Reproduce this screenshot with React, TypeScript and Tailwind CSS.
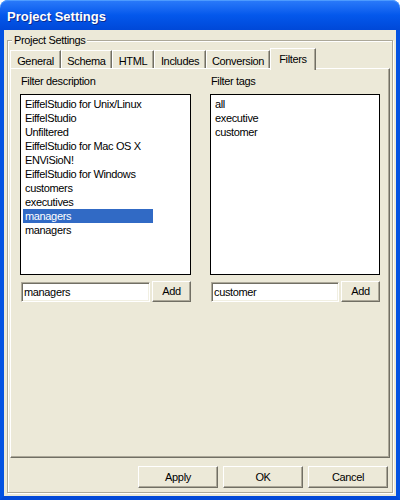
import clsx from "clsx";

const TABS = [
  { label: "General", width: "w-[51px]" },
  { label: "Schema", width: "w-[51px]" },
  { label: "HTML", width: "w-[42px]" },
  { label: "Includes", width: "w-[52px]" },
  { label: "Conversion", width: "w-[64px]" },
  { label: "Filters", width: "w-[46px]", selected: true },
];

const DESCRIPTIONS = [
  "EiffelStudio for Unix/Linux",
  "EiffelStudio",
  "Unfiltered",
  "EiffelStudio for Mac OS X",
  "ENViSioN!",
  "EiffelStudio for Windows",
  "customers",
  "executives",
  "managers",
  "managers",
];

const TAGS = ["all", "executive", "customer"];

const raised =
  "border border-t-white border-l-white border-r-[#716F64] border-b-[#716F64] shadow-[inset_-1px_-1px_0_#ACA899] bg-[#ECE9D8]";
const sunken =
  "border border-t-[#ACA899] border-l-[#ACA899] border-r-white border-b-white shadow-[inset_1px_1px_0_#716F64,inset_-1px_-1px_0_#F1EFE2] bg-white";

const ListBox = ({ items, selected }: { items: string[]; selected?: number }) => (
  <div className="h-[181px] border border-black bg-white pt-[2px] pl-[2px]">
    {items.map((v, i) => (
      <div
        key={i}
        className={clsx(
          "h-[14px] w-[130px] pl-[2px] leading-[15px] whitespace-nowrap",
          i === selected ? "bg-[#316AC5] text-white" : "text-black"
        )}
      >
        {v}
      </div>
    ))}
  </div>
);

const FilterColumn = ({
  label,
  items,
  value,
  selected,
  inputWidth,
}: {
  label: string;
  items: string[];
  value: string;
  selected?: number;
  inputWidth: string;
}) => (
  <div className="flex flex-col">
    <div className="h-[13px] pl-[1px] leading-[13px]">{label}</div>
    <div className="mt-[6px]">
      <ListBox items={items} selected={selected} />
    </div>
    <div className="mt-[6px] flex items-center gap-[2px] pl-[1px]">
      <div className={clsx(sunken, inputWidth, "h-[20px] pl-[2px] leading-[18px]")}>{value}</div>
      <button className={clsx(raised, "h-[21px] flex-1 leading-[19px]")}>Add</button>
    </div>
  </div>
);

export default function App() {
  return (
    <div className="h-[502px] w-[400px] bg-white font-['Liberation_Sans',Arial,sans-serif] text-[11px] tracking-[-0.35px] text-black">
      <div className="flex h-[500px] flex-col">
        <div className="h-[30px] rounded-t-[8px] bg-gradient-to-b from-[#2B7BFA] via-[#0458EC] to-[#0048D8] pl-[7px] pt-[7px] shadow-[inset_0_1px_0_#4D9BFF]">
          <span className="text-[13px] font-bold leading-[20px] tracking-normal text-white [text-shadow:1px_1px_0_#0A2A90]">
            Project Settings
          </span>
        </div>
        <div className="flex flex-1 flex-col border-x-4 border-b-4 border-x-[#0352E2] border-b-[#0349D8] bg-[#ECE9D8] px-[3px] pb-[3px] pt-[10px]">
          <div className="relative flex flex-1 flex-col border border-[#ACA899] px-[2px] pt-[7px] shadow-[inset_1px_1px_0_#fff,1px_1px_0_#fff]">
            <span className="absolute -top-[7px] left-[4px] bg-[#ECE9D8] px-[2px] leading-[13px]">
              Project Settings
            </span>
            <div className="flex h-[20px] items-end">
              {TABS.map((t) => (
                <div
                  key={t.label}
                  className={clsx(
                    t.width,
                    "border-l border-t border-white border-r border-r-[#716F64] bg-[#ECE9D8] pt-[4px] text-center leading-[13px] shadow-[inset_-1px_0_0_#ACA899]",
                    t.selected ? "relative z-10 -mb-[2px] h-[22px] pt-[3px]" : "h-[18px]"
                  )}
                >
                  {t.label}
                </div>
              ))}
            </div>
            <div className="grid h-[390px] grid-cols-[171px_170px] content-start gap-x-[19px] border border-t-white border-l-white border-r-[#716F64] border-b-[#716F64] pl-[9px] pt-[6px] shadow-[inset_-1px_-1px_0_#ACA899]">
              <FilterColumn
                label="Filter description"
                items={DESCRIPTIONS}
                value="managers"
                selected={8}
                inputWidth="w-[129px]"
              />
              <FilterColumn label="Filter tags" items={TAGS} value="customer" inputWidth="w-[128px]" />
            </div>
            <div className="mt-[8px] flex justify-end gap-[5px] pr-[2px]">
              {["Apply", "OK", "Cancel"].map((b) => (
                <button key={b} className={clsx(raised, "h-[22px] w-[80px] leading-[20px]")}>
                  {b}
                </button>
              ))}
            </div>
          </div>
        </div>
      </div>
    </div>
  );
}
